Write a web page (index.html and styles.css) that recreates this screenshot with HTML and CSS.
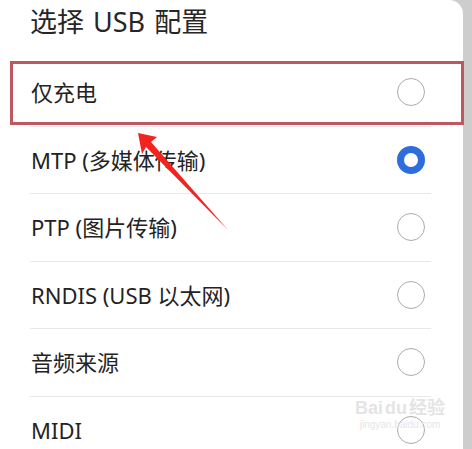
FILE: index.html
```html
<!DOCTYPE html>
<html lang="zh-CN">
<head>
<meta charset="utf-8">
<title>选择 USB 配置</title>
<link rel="stylesheet" href="styles.css">
</head>
<body>
<div class="screen">
  <div class="card">
    <h1 class="title">选择 USB 配置</h1>
    <ul class="list">
      <li class="row"><span class="label">仅充电</span><span class="radio"></span></li>
      <li class="row"><span class="label">MTP (多媒体传输)</span><span class="radio checked"></span></li>
      <li class="row"><span class="label">PTP (图片传输)</span><span class="radio"></span></li>
      <li class="row"><span class="label">RNDIS (USB 以太网)</span><span class="radio"></span></li>
      <li class="row"><span class="label">音频来源</span><span class="radio"></span></li>
      <li class="row"><span class="label">MIDI</span><span class="radio"></span></li>
    </ul>
  </div>
  <div class="scrollbar"></div>

  <div class="highlight"></div>
  <svg class="arrow" width="472" height="449" viewBox="0 0 472 449">
    <polygon points="138,133 157,137 151,142 228,230 146,147 142,154" fill="#f4231f"/>
  </svg>
  <div class="watermark">
    <div class="wm-top"><span>Bai</span><span class="paw">du</span><span>经验</span></div>
    <div class="wm-sub">jingyan.baidu.com</div>
  </div>
</div>
</body>
</html>
```

FILE: styles.css
```css
* { box-sizing: border-box; }
html, body {
  margin: 0;
  padding: 0;
  background: #ffffff;
}
.screen {
  position: relative;
  width: 472px;
  height: 449px;
  overflow: hidden;
  display: flex;
  background: #cdcdcd;
  font-family: "Noto Sans", "Noto Sans CJK SC", sans-serif;
  color: #222222;
}
.card {
  width: 463px;
  height: 449px;
  background: #ffffff;
  border-top-right-radius: 14px;
}
.scrollbar {
  flex: 1;
}
.title {
  margin: 0;
  padding: 5px 0 0 30px;
  height: 59px;
  font-size: 27px;
  line-height: 34px;
  font-weight: 400;
  word-spacing: 2px;
  color: #262626;
}
.list {
  list-style: none;
  margin: 0;
  padding: 0;
}
.row {
  display: flex;
  align-items: center;
  justify-content: space-between;
  height: 67.5px;
  margin: 0 32px 0 30px;
  border-bottom: 1px solid #e8e8e8;
}
.row:last-child { border-bottom: none; }
.label {
  font-size: 22px;
  line-height: 30px;
  padding-left: 1px;
  color: #232323;
}
.radio {
  width: 28px;
  height: 28px;
  margin-right: 6px;
  border-radius: 50%;
  border: 1.5px solid #ababab;
}
.radio.checked {
  border: 7.5px solid #2d6ddc;
}
.highlight {
  position: absolute;
  left: 10px;
  top: 61px;
  width: 454px;
  height: 64px;
  border: 3px solid #c0575f;
}
.arrow {
  position: absolute;
  left: 0;
  top: 0;
}
.watermark {
  position: absolute;
  left: 355px;
  top: 398px;
  color: #e2e2e2;
  font-family: "Liberation Sans", "Noto Sans CJK SC", sans-serif;
  text-align: center;
}
.wm-top {
  font-size: 18px;
  line-height: 20px;
  font-weight: 700;
  display: flex;
  gap: 2px;
  color: #e4e4e4;
}
.wm-sub {
  font-size: 10px;
  line-height: 14px;
  color: #e6e6e6;
}
```
